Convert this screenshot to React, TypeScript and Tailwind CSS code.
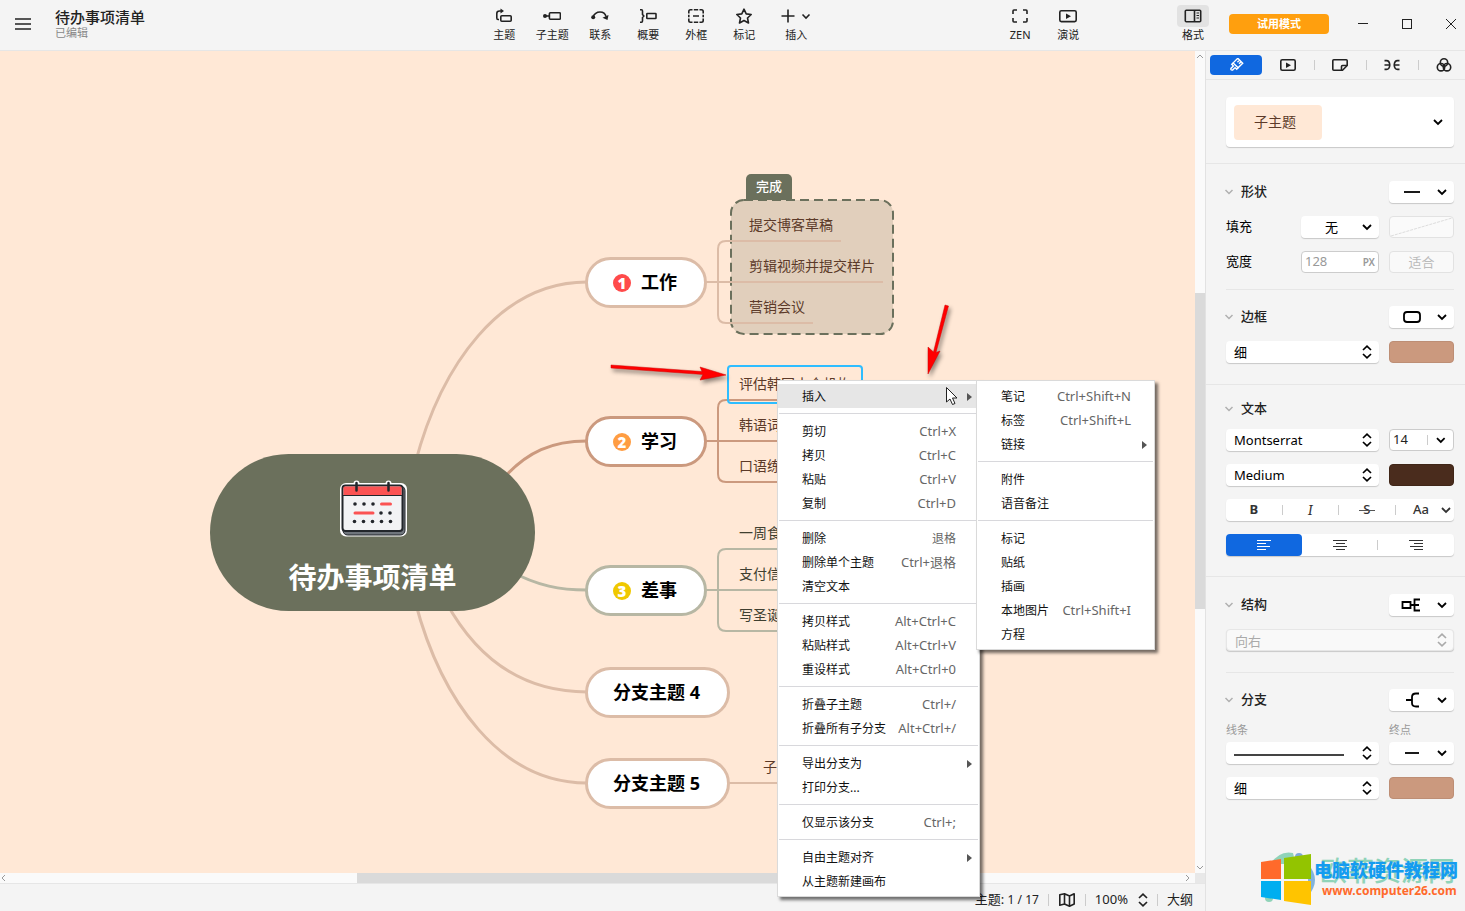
import { useState } from "react";
import type { ReactNode } from "react";
import clsx from "clsx";

type MenuEntry =
  | "-"
  | {
      label: string;
      keys?: string;
      sub?: boolean;
      active?: boolean;
    };

const contextMenu: MenuEntry[] = [
  { label: "插入", sub: true, active: true },
  "-",
  { label: "剪切", keys: "Ctrl+X" },
  { label: "拷贝", keys: "Ctrl+C" },
  { label: "粘贴", keys: "Ctrl+V" },
  { label: "复制", keys: "Ctrl+D" },
  "-",
  { label: "删除", keys: "退格" },
  { label: "删除单个主题", keys: "Ctrl+退格" },
  { label: "清空文本" },
  "-",
  { label: "拷贝样式", keys: "Alt+Ctrl+C" },
  { label: "粘贴样式", keys: "Alt+Ctrl+V" },
  { label: "重设样式", keys: "Alt+Ctrl+0" },
  "-",
  { label: "折叠子主题", keys: "Ctrl+/" },
  { label: "折叠所有子分支", keys: "Alt+Ctrl+/" },
  "-",
  { label: "导出分支为", sub: true },
  { label: "打印分支..." },
  "-",
  { label: "仅显示该分支", keys: "Ctrl+;" },
  "-",
  { label: "自由主题对齐", sub: true },
  { label: "从主题新建画布" },
];

const insertMenu: MenuEntry[] = [
  { label: "笔记", keys: "Ctrl+Shift+N" },
  { label: "标签", keys: "Ctrl+Shift+L" },
  { label: "链接", sub: true },
  "-",
  { label: "附件" },
  { label: "语音备注" },
  "-",
  { label: "标记" },
  { label: "贴纸" },
  { label: "插画" },
  { label: "本地图片", keys: "Ctrl+Shift+I" },
  { label: "方程" },
];

/* ---------- icons ---------- */

function Icon({ children, w = 18, h = 16 }: { children: ReactNode; w?: number; h?: number }) {
  return (
    <svg
      width={w}
      height={h}
      viewBox={`0 0 ${w} ${h}`}
      fill="none"
      stroke="currentColor"
      strokeWidth="1.6"
      aria-hidden="true"
    >
      {children}
    </svg>
  );
}

const TopicIcon = () => (
  <Icon>
    <rect x="5.8" y="7.8" width="10.4" height="5.4" rx="1" />
    <path d="M4 11.5H3Q1.8 11.5 1.8 10V5.5Q1.8 3 4.5 3H7" />
    <path d="M5.5 0.5 9 3 5.5 5.5Z" fill="currentColor" stroke="none" />
  </Icon>
);

const SubtopicIcon = () => (
  <Icon>
    <rect x="6.4" y="4.8" width="11" height="6.4" rx="1" />
    <path d="M1 8H6.5" />
    <circle cx="2" cy="8" r="2" fill="currentColor" stroke="none" />
  </Icon>
);

const RelationIcon = () => (
  <Icon>
    <path d="M2 9Q4 4 9 4T15 8.5" />
    <circle cx="2.2" cy="9.2" r="2" fill="currentColor" stroke="none" />
    <path d="M11.5 9.8 17.5 7 16.5 12Z" fill="currentColor" stroke="none" />
  </Icon>
);

const SummaryIcon = () => (
  <Icon>
    <path d="M1 1.8H2.5Q3.5 1.8 3.5 3V6.5L4.8 8 3.5 9.5V13Q3.5 14.2 2.5 14.2H1" />
    <rect x="7.8" y="5.5" width="9.2" height="5" rx=".6" />
  </Icon>
);

const BoundaryIcon = () => (
  <Icon>
    <path d="M5.5 1.8H3.5Q1.8 1.8 1.8 3.5V5.5M1.8 6.8V9.2M1.8 10.5V12.5Q1.8 14.2 3.5 14.2H5.5M6.8 1.8H11.2M12.5 1.8H14.5Q16.2 1.8 16.2 3.5V5.5M16.2 6.8V9.2M16.2 10.5V12.5Q16.2 14.2 14.5 14.2H12.5M6.8 14.2H11.2M6 8H12" />
  </Icon>
);

const StarIcon = () => (
  <Icon>
    <path d="M9 1.2 11.2 5.9 16.2 6.5 12.5 10 13.5 15 9 12.5 4.5 15 5.5 10 1.8 6.5 6.8 5.9Z" strokeLinejoin="round" />
  </Icon>
);

const InsertIcon = () => (
  <Icon w={30}>
    <path d="M7 1.5V14.5M.5 8H13.5" />
    <path d="M21.5 6.5 25 10 28.5 6.5" />
  </Icon>
);

const ZenIcon = () => (
  <Icon>
    <path d="M6 2H3Q2 2 2 3V6M12 2H15Q16 2 16 3V6M2 10V13Q2 14 3 14H6M16 10V13Q16 14 15 14H12" />
  </Icon>
);

const PlayIcon = ({ small }: { small?: boolean }) => (
  <Icon>
    {small ? (
      <rect x="1.8" y="2.8" width="14.4" height="10.4" rx="1.5" />
    ) : (
      <rect x=".8" y="2.8" width="16.4" height="10.8" rx="1.5" />
    )}
    <path d="M7 5.5 12 8.2 7 11Z" fill="currentColor" stroke="none" />
  </Icon>
);

const FormatIcon = () => (
  <Icon>
    <rect x="1.3" y="2.3" width="15.4" height="11.4" rx="1" />
    <path d="M10.5 2.5V13.5" />
    <path d="M12.5 5H15M12.5 7.5H15M12.5 10H15" strokeWidth="1" />
  </Icon>
);

const BrushIcon = () => (
  <Icon h={14}>
    <g transform="rotate(45 9 7)" strokeWidth="1.4">
      <path d="M5.5 7.5V1H12.5V7.5ZM8 1V4M10.3 1V4" />
      <path d="M5.5 7.5V9.5H7.8V13Q9 14.8 10.2 13V9.5H12.5V7.5" />
    </g>
  </Icon>
);

const StickerIcon = () => (
  <Icon>
    <path d="M2.8 2.8H15.2Q16.2 2.8 16.2 3.8V8.5L11.5 13.2H2.8Q1.8 13.2 1.8 12.2V3.8Q1.8 2.8 2.8 2.8Z" />
    <path d="M10.5 13V9.5Q10.5 8.5 11.5 8.5H16" />
  </Icon>
);

const MapStyleIcon = () => (
  <Icon>
    <path d="M1.5 3.6H3.5Q6.5 3.6 6.8 8Q6.5 12.4 3.5 12.4H1.5M16.5 3.6H14.5Q11.5 3.6 11.2 8Q11.5 12.4 14.5 12.4H16.5M1.5 8H7.5M10.5 8H16.5" />
  </Icon>
);

const ThemeIcon = () => (
  <Icon>
    <circle cx="9" cy="5.5" r="3.7" />
    <circle cx="6" cy="10.2" r="3.7" />
    <circle cx="12" cy="10.2" r="3.7" />
  </Icon>
);

const Chevron = ({ className }: { className?: string }) => (
  <svg className={className} width="10" height="8" viewBox="0 0 10 8" fill="none" stroke="currentColor" strokeWidth="1.8" aria-hidden="true">
    <path d="M1 2 5 6 9 2" />
  </svg>
);

const UpDown = ({ className }: { className?: string }) => (
  <svg className={className} width="10" height="14" viewBox="0 0 10 14" fill="none" stroke="currentColor" strokeWidth="1.7" aria-hidden="true">
    <path d="M1 5 5 1.2 9 5M1 9 5 12.8 9 9" />
  </svg>
);

/* ---------- top bar ---------- */

function ToolButton({ label, icon, wide, active }: { label: string; icon: ReactNode; wide?: boolean; active?: boolean }) {
  return (
    <button className={clsx("flex flex-col items-center", wide ? "w-14" : "w-12")}>
      <span className={clsx("flex h-[22px] w-8 items-center justify-center rounded", active && "bg-[#e2e2e2]")}>{icon}</span>
      <span className="text-[11px] leading-4">{label}</span>
    </button>
  );
}

function TopBar() {
  return (
    <header className="flex h-[51px] items-center border-b border-[#e6e6e6] bg-[#f4f4f4] pb-[2px] text-[#222]">
      <div className="flex flex-[25] items-center">
        <button aria-label="菜单" className="ml-[15px]">
          <Icon w={16}>
            <path d="M0 3H16M0 8H16M0 13H16" />
          </Icon>
        </button>
        <div className="ml-6">
          <h1 className="text-[15px] leading-[18px] font-medium whitespace-nowrap">待办事项清单</h1>
          <p className="text-[11px] leading-[14px] text-[#888]">已编辑</p>
        </div>
      </div>
      <nav className="flex shrink-0">
        <ToolButton label="主题" icon={<TopicIcon />} />
        <ToolButton label="子主题" icon={<SubtopicIcon />} />
        <ToolButton label="联系" icon={<RelationIcon />} />
        <ToolButton label="概要" icon={<SummaryIcon />} />
        <ToolButton label="外框" icon={<BoundaryIcon />} />
        <ToolButton label="标记" icon={<StarIcon />} />
        <ToolButton label="插入" icon={<InsertIcon />} wide />
        <div className="ml-[172px] flex">
          <ToolButton label="ZEN" icon={<ZenIcon />} />
          <ToolButton label="演说" icon={<PlayIcon />} />
        </div>
      </nav>
      <div className="flex-[4]" />
      <div className="flex shrink-0 items-center">
        <ToolButton label="格式" icon={<FormatIcon />} active />
        <button className="ml-3 h-5 w-[100px] rounded bg-[#ff9f0e] text-[11px] font-bold text-white">试用模式</button>
        <div className="ml-5 flex gap-4 text-[#222]">
          <button aria-label="最小化" className="flex h-6 w-7 items-center justify-center">
            <svg width="10" height="10" stroke="currentColor"><path d="M0 4.5H10" /></svg>
          </button>
          <button aria-label="最大化" className="flex h-6 w-7 items-center justify-center">
            <svg width="10" height="10" fill="none" stroke="currentColor"><rect x=".5" y=".5" width="9" height="9" /></svg>
          </button>
          <button aria-label="关闭" className="flex h-6 w-7 items-center justify-center">
            <svg width="10" height="10" stroke="currentColor"><path d="M0 0 10 10M10 0 0 10" /></svg>
          </button>
        </div>
      </div>
    </header>
  );
}

/* ---------- canvas ---------- */

function Links() {
  return (
    <svg className="absolute inset-0 h-full w-full" fill="none" aria-hidden="true">
      <g transform="translate(0 -51)">
        <g stroke="#dcbca7" strokeWidth="3">
          <path d="M415 464C441 365 500 282 587 282" />
          <path d="M415 601C441 700 500 783 587 783" />
          <path d="M446 602C475 655 520 692 587 692" />
        </g>
        <path d="M502 480C527 451 553 441 587 441" stroke="#cb997e" strokeWidth="3" />
        <path d="M510 571C538 586 560 590 587 590" stroke="#b7b7a4" strokeWidth="3" />

        <rect x="731" y="200" width="162" height="134" rx="13" fill="#e1cfbc" stroke="#6b705c" strokeWidth="2" strokeDasharray="9 5" />
        <g strokeWidth="2">
          <g stroke="#dcbca7">
            <path d="M706 282H883M841 241H726Q718 241 718 249V315Q718 323 726 323H813M729 783H800" />
          </g>
          <path d="M706 441H800M800 400H726Q718 400 718 408V474Q718 482 726 482H800" stroke="#cb997e" />
          <path d="M706 590H800M800 549H726Q718 549 718 557V623Q718 631 726 631H800" stroke="#b7b7a4" />
        </g>
        <rect x="728" y="366" width="134" height="37" rx="3" stroke="#2ebdff" strokeWidth="2" />
      </g>
    </svg>
  );
}

function Calendar() {
  const dots = [354, 363, 372, 381, 390];
  return (
    <svg width="70" height="58" viewBox="338 480 70 58" aria-hidden="true">
      <rect x="340" y="483" width="67" height="53.5" rx="6" fill="#fff" />
      <circle cx="356.5" cy="483.5" r="3" fill="#fff" />
      <circle cx="388.5" cy="483.5" r="3" fill="#fff" />
      <rect x="343" y="486" width="62" height="49" rx="4.5" fill="#6f757c" stroke="#22262b" />
      <rect x="342.5" y="485.5" width="60" height="45.5" rx="3" fill="#f2f3f5" stroke="#22262b" strokeWidth="2" />
      <path d="M343.5 495V487.5Q343.5 486.5 345 486.5H400.5Q401.5 486.5 401.5 487.5V495Z" fill="#fb5353" />
      <path d="M343 495.5H402" stroke="#22262b" />
      <path d="M356.5 483V490.5M388.5 483V490.5" stroke="#22262b" strokeWidth="2.5" strokeLinecap="round" />
      <g fill="#22262b">
        {dots.map((x) => (
          <g key={x}>
            {x < 380 && <circle cx={x + 1} cy="504" r="1.8" />}
            {x > 372 && <circle cx={x} cy="513" r="1.8" />}
            <circle cx={x + 0.5} cy="521.5" r="1.8" />
          </g>
        ))}
      </g>
      <path d="M381.5 504H390.5M355 513H373" stroke="#fb5353" strokeWidth="3" strokeLinecap="round" />
    </svg>
  );
}

function Branch({ className, num, badge, children }: { className: string; num?: string; badge?: string; children: ReactNode }) {
  return (
    <div
      className={clsx(
        "absolute left-[585px] flex h-[51px] items-center rounded-full border-[3px] bg-white pr-[27px] pl-[25px] text-[18px] font-bold whitespace-nowrap text-black",
        className
      )}
    >
      {num && (
        <span className={clsx("mr-[10px] flex size-[18px] items-center justify-center rounded-full text-[15px] leading-[18px] font-black text-white", badge)}>
          {num}
        </span>
      )}
      {children}
    </div>
  );
}

function Leaf({ className, children }: { className: string; children: ReactNode }) {
  return <span className={clsx("absolute text-sm leading-5 whitespace-nowrap", className)}>{children}</span>;
}

function Canvas() {
  return (
    <main className="relative flex-1 overflow-hidden bg-[#ffe8d6]">
      <Links />
      <div className="absolute top-[403px] left-[210px] flex h-[157px] w-[325px] flex-col items-center rounded-full bg-[#6b705c] pt-[26px]">
        <Calendar />
        <strong className="mt-5 text-[28px] leading-[38px] font-bold text-white">待办事项清单</strong>
      </div>

      <Branch className="top-[206px] border-[#dcbca7]" num="1" badge="bg-[#ff4a4a]">工作</Branch>
      <Branch className="top-[365px] border-[#cb997e]" num="2" badge="bg-[#ff9d42]">学习</Branch>
      <Branch className="top-[514px] border-[#b7b7a4]" num="3" badge="bg-[#f0c800]">差事</Branch>
      <Branch className="top-[616px] border-[#dcbca7]">分支主题 4</Branch>
      <Branch className="top-[707px] border-[#dcbca7]">分支主题 5</Branch>

      <span className="absolute top-[123px] left-[746px] flex h-[26px] w-[46px] items-center justify-center rounded-t-[5px] bg-[#6b705c] text-[13px] font-medium text-white">
        完成
      </span>
      <Leaf className="top-[164px] left-[749px] text-[#5c3a29]">提交博客草稿</Leaf>
      <Leaf className="top-[205px] left-[749px] text-[#5c3a29]">剪辑视频并提交样片</Leaf>
      <Leaf className="top-[246px] left-[749px] text-[#5c3a29]">营销会议</Leaf>
      <Leaf className="top-[323px] left-[739px] text-[#5c3a29]">评估韩国十个机构</Leaf>
      <Leaf className="top-[364px] left-[739px] text-[#5c3a29]">韩语词汇</Leaf>
      <Leaf className="top-[405px] left-[739px] text-[#5c3a29]">口语练习</Leaf>
      <Leaf className="top-[472px] left-[739px] text-[#3f3f30]">一周食谱</Leaf>
      <Leaf className="top-[513px] left-[739px] text-[#3f3f30]">支付信用卡</Leaf>
      <Leaf className="top-[554px] left-[739px] text-[#3f3f30]">写圣诞贺卡</Leaf>
      <Leaf className="top-[706px] left-[763px] text-[#5c3a29]">子主题</Leaf>

      {/* pointers at the selected topic and the menu */}
      <svg className="absolute inset-0 h-full w-full drop-shadow-[2px_3px_2px_rgba(0,0,0,0.45)]" fill="#f00" aria-hidden="true">
        <g transform="translate(0 -51)">
          <path d="M611 365 702 371.5 700 367 726 375 700 380 703 374.5 611 368Z" stroke="#d00000" strokeWidth=".5" />
          <path d="M945 305 933.5 352 928 347 928 374 940 351 936 352.5 948.5 306Z" stroke="#d00000" strokeWidth=".5" />
        </g>
      </svg>
    </main>
  );
}

function VerticalScroll() {
  return (
    <div className="flex w-[10px] flex-col items-center bg-[#fafafa] text-[#9a9a9a]">
      <svg width="10" height="10" fill="none" stroke="currentColor"><path d="M2 7 5 4 8 7" /></svg>
      <div className="grow-[232] basis-0" />
      <div className="w-full grow-[316] basis-0 bg-[#dadada]" />
      <div className="grow-[254] basis-0" />
      <svg width="10" height="10" fill="none" stroke="currentColor"><path d="M2 3 5 6 8 3" /></svg>
    </div>
  );
}

function HorizontalScroll() {
  return (
    <div className="flex h-[10px] bg-[#fafafa] text-[#9a9a9a]">
      <svg width="10" height="10" fill="none" stroke="currentColor"><path d="M5 2 2 5 5 8" /></svg>
      <div className="grow-[347] basis-0" />
      <div className="grow-[623] basis-0 bg-[#dadada]" />
      <div className="grow-[205] basis-0" />
      <svg width="10" height="10" fill="none" stroke="currentColor"><path d="M1 2 4 5 1 8" /></svg>
      <div className="w-[10px] bg-[#e8e8e8]" />
    </div>
  );
}

function StatusBar() {
  return (
    <footer className="flex h-7 items-center justify-end border-t border-[#e6e6e6] bg-[#f4f4f4] pt-1 pr-3 text-[13px] text-[#222]">
      <span>
        主题: <span className="text-xs">1 / 17</span>
      </span>
      <span className="mx-[9px] h-3 w-px bg-[#ccc]" />
      <button aria-label="导航图">
        <Icon>
          <path d="M1.8 2.8 6.5 1.8V12L1.8 13.2ZM6.5 1.8 11.5 4V14.2L6.5 12M11.5 4 16.2 1.8V12L11.5 14.2" strokeLinejoin="round" />
        </Icon>
      </button>
      <span className="mx-[9px] h-3 w-px bg-[#ccc]" />
      <button className="flex items-center gap-[10px]">
        100% <UpDown />
      </button>
      <span className="mx-[9px] h-3 w-px bg-[#ccc]" />
      <button>大纲</button>
    </footer>
  );
}

/* ---------- format panel ---------- */

const box = "h-[22px] rounded bg-white shadow-[0_1px_1px_rgba(0,0,0,0.18)]";

function PickSelect({ label, options, disabled }: { label: string; options: string[]; disabled?: boolean }) {
  const [value, setValue] = useState(options[0]);
  return (
    <div className={clsx("relative flex-1", disabled ? "text-[#aaa]" : "text-black")}>
      <select
        aria-label={label}
        value={value}
        disabled={disabled}
        onChange={(e) => setValue(e.target.value)}
        className={clsx(
          "h-[22px] w-full appearance-none rounded px-2 text-[13px] leading-[22px] shadow-[0_1px_1px_rgba(0,0,0,0.18)]",
          disabled ? "border border-[#e6e6e6] bg-[#f9f9f9] opacity-100" : "bg-white"
        )}
      >
        {options.map((o) => (
          <option key={o}>{o}</option>
        ))}
      </select>
      <UpDown className="pointer-events-none absolute top-1 right-[7px]" />
    </div>
  );
}

function IconPick({ label, children }: { label: string; children: ReactNode }) {
  return (
    <button aria-label={label} className={clsx("flex w-[65px] items-center justify-between pr-[7px] pl-3 text-black", box)}>
      <svg width="22" height="16" viewBox="0 0 22 16" fill="none" stroke="currentColor" strokeWidth="1.8">
        {children}
      </svg>
      <Chevron />
    </button>
  );
}

function SectionHead({ title, children }: { title: string; children?: ReactNode }) {
  return (
    <div className="flex h-[22px] items-center">
      <svg className="-ml-[2px] text-[#b0b0b0]" width="10" height="8" fill="none" stroke="currentColor" strokeWidth="1.5" aria-hidden="true">
        <path d="M1.5 2 5 5.5 8.5 2" />
      </svg>
      <h2 className="ml-[7px] flex-1 text-[13px] font-medium text-[#222]">{title}</h2>
      {children}
    </div>
  );
}

function Section({ className, children }: { className?: string; children: ReactNode }) {
  return <section className={clsx("flex flex-col gap-[13px] pr-[11px] pl-5", className)}>{children}</section>;
}

const Swatch = ({ label, className }: { label: string; className: string }) => (
  <button aria-label={label} className={clsx("h-[22px] w-[65px] rounded border", className)} />
);

function Tabs() {
  return (
    <div className="flex h-[29px] items-center border-b border-[#e6e6e6] pl-1 text-[#222]">
      <button aria-label="样式" className="flex h-5 w-[52px] items-center justify-center rounded bg-[#1068e0] text-white">
        <BrushIcon />
      </button>
      <button aria-label="演说" className="flex h-5 w-[52px] items-center justify-center"><PlayIcon small /></button>
      <span className="-mr-px h-[10px] w-px bg-[#ccc]" />
      <button aria-label="贴纸" className="flex h-5 w-[52px] items-center justify-center"><StickerIcon /></button>
      <span className="-mr-px h-[10px] w-px bg-[#ccc]" />
      <button aria-label="导图" className="flex h-5 w-[52px] items-center justify-center"><MapStyleIcon /></button>
      <span className="-mr-px h-[10px] w-px bg-[#ccc]" />
      <button aria-label="配色" className="flex h-5 flex-1 items-center justify-center pl-1"><ThemeIcon /></button>
    </div>
  );
}

function FormatPanel() {
  const [size, setSize] = useState("14");
  return (
    <aside className="relative w-[260px] shrink-0 overflow-hidden border-l border-[#e2e2e2] bg-[#f4f4f4] text-[13px] text-black">
      <Tabs />
      <div className="border-b border-[#e6e6e6] pt-[17px] pr-[11px] pb-4 pl-5">
        <button className="flex h-[50px] w-full items-center justify-between rounded bg-white pr-[11px] pl-2 shadow-[0_1px_1px_rgba(0,0,0,0.18)]">
          <span className="flex h-[35px] w-[88px] items-center justify-center rounded bg-[#ffe8d6] pr-[6px] text-sm text-[#5c3a29]">子主题</span>
          <Chevron />
        </button>
      </div>

      <Section className="pt-[17px]">
        <SectionHead title="形状">
          <IconPick label="形状">
            <path d="M3 8H19" />
          </IconPick>
        </SectionHead>
        <div className="flex items-center gap-[10px]">
          <label htmlFor="fill" className="flex-1">填充</label>
          <div className="relative w-[78px]">
            <select id="fill" className={clsx("w-full appearance-none pl-6 text-[13px] leading-[22px]", box)}>
              <option>无</option>
            </select>
            <Chevron className="pointer-events-none absolute top-[7px] right-[7px]" />
          </div>
          <button aria-label="填充颜色" className="h-[22px] w-[65px] rounded border border-[#e2e2e2] bg-[#fafafa]">
            <svg width="63" height="20" stroke="#ddd" strokeDasharray="3 1"><path d="M1 19 62 1" /></svg>
          </button>
        </div>
        <div className="flex items-center gap-[10px]">
          <label htmlFor="width" className="flex-1">宽度</label>
          <div className="flex h-[22px] w-[78px] items-center rounded border border-[#ccc] bg-white px-[3px]">
            <input id="width" defaultValue="128" className="w-full min-w-0 text-[13px] text-[#999] outline-none" />
            <span className="text-[10px] font-semibold text-[#999]">PX</span>
          </div>
          <button disabled className="h-[22px] w-[65px] rounded border border-[#e2e2e2] bg-[#f9f9f9] leading-5 text-[#bbb]">适合</button>
        </div>
        <hr className="mt-[3px] border-[#e6e6e6]" />
      </Section>

      <Section className="border-b border-[#e6e6e6] pt-4 pb-[21px]">
        <SectionHead title="边框">
          <IconPick label="边框形状">
            <rect x="3" y="3" width="16" height="10" rx="3" />
          </IconPick>
        </SectionHead>
        <div className="flex gap-[10px]">
          <PickSelect label="边框粗细" options={["细", "中", "粗"]} />
          <Swatch label="边框颜色" className="border-[#bd8e75] bg-[#cb997e]" />
        </div>
      </Section>

      <Section className="border-b border-[#e6e6e6] pt-[13px] pb-5">
        <div className="-mb-1">
          <SectionHead title="文本" />
        </div>
        <div className="flex gap-[10px]">
          <PickSelect label="字体" options={["Montserrat"]} />
          <div className="flex h-[22px] w-[65px] items-center rounded border border-[#ccc] bg-white pr-[7px] pl-[3px]">
            <input aria-label="字号" value={size} onChange={(e) => setSize(e.target.value)} className="w-9 min-w-0 text-[13px] text-[#222] outline-none" />
            <span className="mr-2 h-[10px] w-px bg-[#ccc]" />
            <Chevron />
          </div>
        </div>
        <div className="flex gap-[10px]">
          <PickSelect label="字重" options={["Medium", "Regular", "Bold"]} />
          <Swatch label="文本颜色" className="border-[#402618] bg-[#4a2c1d]" />
        </div>
        <div className={clsx("flex items-center text-[#333]", box)}>
          <button className="flex-1 font-bold">B</button>
          <span className="h-[10px] w-px bg-[#ccc]" />
          <button className="flex-1 font-serif text-[15px] leading-5 italic">I</button>
          <span className="h-[10px] w-px bg-[#ccc]" />
          <button className="relative flex-1 font-medium">
            S
            <span className="absolute inset-x-5 top-1/2 h-px bg-[#555]" />
          </button>
          <span className="h-[10px] w-px bg-[#ccc]" />
          <button className="flex flex-1 items-center justify-end gap-3 pr-[3px] font-medium">
            Aa <Chevron />
          </button>
        </div>
        <div className={clsx("flex items-center text-[#333]", box)}>
          <button aria-label="左对齐" className="flex h-[22px] flex-1 items-center justify-center rounded bg-[#1068e0] text-white">
            <svg width="14" height="12" stroke="currentColor"><path d="M0 1.5H14M0 4.5H9M0 7.5H13M0 10.5H9" /></svg>
          </button>
          <button aria-label="居中" className="flex h-[22px] flex-1 items-center justify-center">
            <svg width="14" height="12" stroke="currentColor"><path d="M0 1.5H14M3 4.5H12M0 7.5H14M3 10.5H12" /></svg>
          </button>
          <span className="h-[10px] w-px bg-[#ccc]" />
          <button aria-label="右对齐" className="flex h-[22px] flex-1 items-center justify-center">
            <svg width="14" height="12" stroke="currentColor"><path d="M0 1.5H14M5 4.5H14M1 7.5H14M5 10.5H14" /></svg>
          </button>
        </div>
      </Section>

      <Section className="pt-[17px]">
        <SectionHead title="结构">
          <IconPick label="结构">
            <path d="M1.5 5H9.5V11H1.5ZM9.5 8H18M19 2.5H13.5V13.5H19" />
          </IconPick>
        </SectionHead>
        <PickSelect label="方向" options={["向右"]} disabled />
        <hr className="mt-[7px] border-[#e6e6e6]" />
      </Section>

      <Section className="pt-4">
        <SectionHead title="分支">
          <IconPick label="分支形状">
            <path d="M5 8H11M18 1.5H15Q11 1.5 11 5V11Q11 14.5 15 14.5H18" />
          </IconPick>
        </SectionHead>
        <div className="-mt-[2px] flex gap-[10px] text-[11px] leading-4 text-[#999]">
          <div className="flex flex-1 flex-col gap-1">
            <span>线条</span>
            <button aria-label="线条" className={clsx("flex items-center justify-between pr-[7px] pl-2 text-black", box)}>
              <span className="mt-1 mr-[18px] h-[2px] flex-1 bg-[#444]" />
              <UpDown />
            </button>
          </div>
          <div className="flex flex-col gap-1">
            <span>终点</span>
            <IconPick label="终点">
              <path d="M4 8H18" />
            </IconPick>
          </div>
        </div>
        <div className="flex gap-[10px]">
          <PickSelect label="线条粗细" options={["细", "中", "粗"]} />
          <Swatch label="线条颜色" className="border-[#bd8e75] bg-[#cb997e]" />
        </div>
      </Section>

      <SiteMark />
    </aside>
  );
}

function SiteMark() {
  return (
    <a href="http://www.computer26.com" aria-label="电脑软硬件教程网" className="absolute right-0 bottom-0 block h-[62px] w-[208px]">
      <svg width="208" height="62" viewBox="1257 849 208 62" fontFamily="'Noto Sans CJK SC', sans-serif" aria-hidden="true">
        <path d="M1270 864Q1280 850 1293 853Q1296 860 1288 864Z" fill="#8fd3b8" />
        <circle cx="1299" cy="857" r="4" fill="#7ea8d8" />
        <path d="M1308 864Q1322 880 1308 896Z" fill="#82b4dc" />
        <circle cx="1269" cy="898" r="4" fill="#8fd3b8" />
        <text x="1320" y="881" fontSize="27" fontWeight="500" fill="#8fd3b8">欧菲资源网</text>
        <path d="M1261 862 1281 859V879H1261Z" fill="#ff6a2b" />
        <path d="M1284 858 1311 854V879H1284Z" fill="#93c400" />
        <path d="M1261 881H1281V900L1261 897Z" fill="#00aef0" />
        <path d="M1284 881H1311V905L1284 901Z" fill="#ffc400" />
        <text x="1314" y="877" fontSize="18" fontWeight="900" fill="#149cf0">电脑软硬件教程网</text>
        <text x="1322" y="895" fontSize="12" fontWeight="700" fill="#ff6a2b" fontFamily="'Noto Sans', sans-serif">www.computer26.com</text>
      </svg>
    </a>
  );
}

/* ---------- menus ---------- */

function Menu({ items, className }: { items: MenuEntry[]; className: string }) {
  return (
    <ul
      role="menu"
      className={clsx(
        "absolute border border-[#dadada] bg-white py-[3px] text-xs text-[#111] shadow-[3px_3px_3px_rgba(0,0,0,0.55)]",
        className
      )}
    >
      {items.map((item, i) =>
        item === "-" ? (
          <li key={i} role="separator" className="mx-px my-[5px] h-px bg-[#d8d8dc]" />
        ) : (
          <li key={i} role="none">
            <button
              role="menuitem"
              className={clsx(
                "relative flex h-6 w-full items-center justify-between pt-[2px] pr-[23px] pl-6 text-left whitespace-nowrap",
                item.active && "bg-[#e6e6e6]"
              )}
            >
              {item.label}
              {item.keys && (
                <span className={clsx("text-[#666]", item.keys === "退格" ? "text-xs" : "text-[13px]")}>{item.keys}</span>
              )}
              {item.sub && (
                <svg className="absolute right-[7px]" width="5" height="8" fill="#555" aria-hidden="true">
                  <path d="M0 0 5 4 0 8Z" />
                </svg>
              )}
            </button>
          </li>
        )
      )}
    </ul>
  );
}

export default function App() {
  return (
    <div className="relative flex min-h-screen flex-col overflow-hidden font-['Noto_Sans','Noto_Sans_CJK_SC',sans-serif]">
      <TopBar />
      <div className="flex flex-1">
        <div className="flex min-w-0 flex-1 flex-col">
          <div className="flex flex-1">
            <Canvas />
            <VerticalScroll />
          </div>
          <HorizontalScroll />
          <StatusBar />
        </div>
        <FormatPanel />
      </div>

      <Menu items={contextMenu} className="top-[380px] left-[777px] w-[203px]" />
      <Menu items={insertMenu} className="top-[380px] left-[976px] w-[179px]" />
      <svg className="absolute top-[386px] left-[945px]" width="14" height="21" fill="#fff" stroke="#222" aria-hidden="true">
        <path d="M1.5 1.5V16L5 13 7.5 18.5 10 17.5 7.5 12H12Z" />
      </svg>
    </div>
  );
}
